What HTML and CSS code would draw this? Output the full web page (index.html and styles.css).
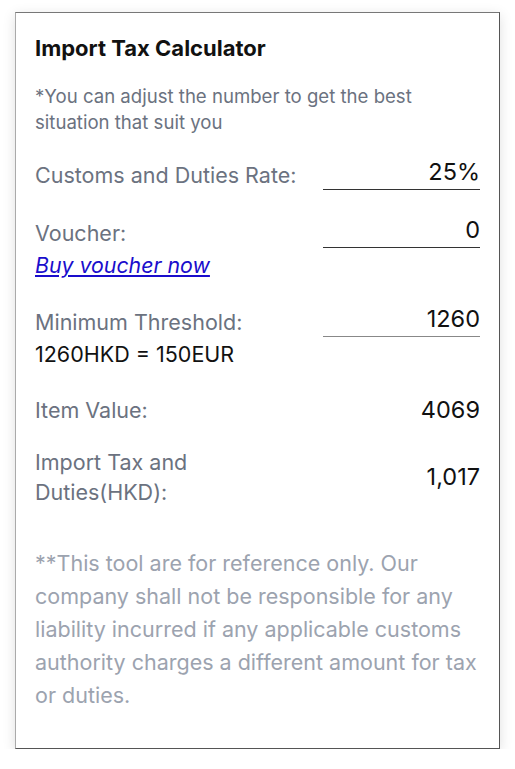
FILE: index.html
```html
<!DOCTYPE html>
<html>
<head>
<meta charset="utf-8">
<link rel="stylesheet" href="styles.css">
</head>
<body>
<div class="card">
  <h1 class="title">Import Tax Calculator</h1>
  <p class="hint">*You can adjust the number to get the best situation that suit you</p>

  <div class="row row-rate">
    <div class="label">Customs and Duties Rate:</div>
    <div class="input">25%</div>
  </div>

  <div class="row row-voucher">
    <div class="label">Voucher:</div>
    <div class="input">0</div>
  </div>
  <a class="link" href="#">Buy voucher now</a>

  <div class="row row-threshold">
    <div class="label">Minimum Threshold:</div>
    <div class="input input-light">1260</div>
  </div>
  <div class="note">1260HKD = 150EUR</div>

  <div class="row row-item">
    <div class="label">Item Value:</div>
    <div class="value">4069</div>
  </div>

  <div class="row row-tax">
    <div class="label">Import Tax and<br>Duties(HKD):</div>
    <div class="value">1,017</div>
  </div>

  <p class="disclaimer">**This tool are for reference only. Our company shall not be responsible for any liability incurred if any applicable customs authority charges a different amount for tax or duties.</p>
</div>
</body>
</html>
```

FILE: styles.css
```css
* { box-sizing: border-box; }
html, body { margin: 0; padding: 0; background: #fff; }
body { font-family: Inter, "Noto Sans", sans-serif; }

.card {
  margin: 12px 0 0 15px;
  width: 485px;
  height: 737px;
  border: 1px solid #555;
  border-top-color: #777;
  border-left-color: #aaa;
  box-shadow: 0 3px 12px rgba(0,0,0,0.13);
  padding: 20px 19px 0 19px;
  background: #fff;
}

.title {
  margin: 0;
  font-size: 22px;
  font-weight: 700;
  color: #111;
  line-height: 30px;
}

.hint {
  margin: 20px 0 0;
  font-size: 18.6px;
  line-height: 26px;
  color: #6b7280;
  width: 400px;
}

.row {
  display: flex;
  justify-content: space-between;
  align-items: flex-end;
}

.label {
  font-size: 21.5px;
  color: #6b7280;
  line-height: 30px;
}

.input {
  width: 157px;
  text-align: right;
  font-size: 23.5px;
  color: #111;
  border-bottom: 1px solid #333;
  line-height: 30px;
  padding-bottom: 2px;
}
.input-light { border-bottom-color: #888; }

.value {
  font-size: 23.5px;
  color: #111;
  line-height: 30px;
}

.row-rate { margin-top: 22px; }
.row-voucher { margin-top: 25px; }

.link {
  display: block;
  margin-top: 4px;
  font-size: 21.3px;
  font-style: italic;
  color: #1a0dcc;
  line-height: 26px;
  text-decoration: underline;
  width: max-content;
}

.row-threshold { margin-top: 26px; }

.note {
  margin-top: 4px;
  font-size: 21.5px;
  color: #111;
  line-height: 26px;
}

.row-item { margin-top: 28px; align-items: center; }
.row-tax { margin-top: 22px; align-items: center; }

.disclaimer {
  margin: 40px 0 0;
  font-size: 21.5px;
  line-height: 33px;
  color: #9ca3af;
}
```
